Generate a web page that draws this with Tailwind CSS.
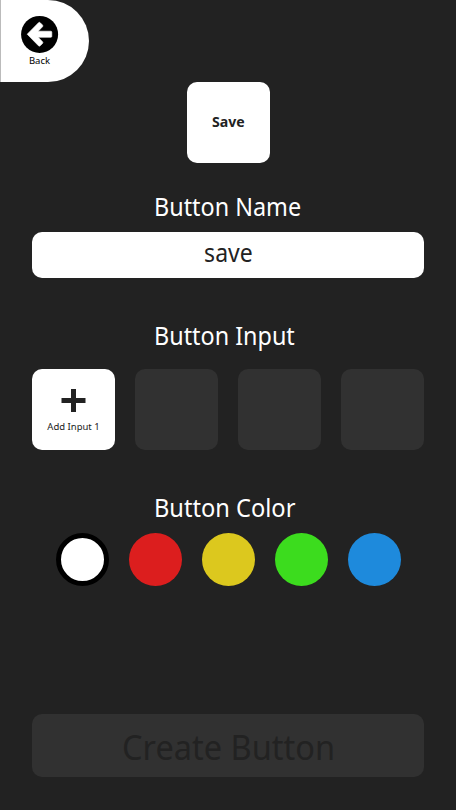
<!DOCTYPE html>
<html lang="en">
<head>
<meta charset="utf-8">
<title>Create Button</title>
<script src="https://cdn.jsdelivr.net/npm/@tailwindcss/browser@4"></script>
</head>
<body class="bg-[#222222] font-['Noto_Sans','Open_Sans',sans-serif] text-[#222222]">
<div class="flex h-[810px] w-[456px] flex-col overflow-hidden whitespace-nowrap bg-[#222222]">
  <button class="flex h-[82px] w-[89px] shrink-0 flex-col items-center rounded-r-[41px] border-l border-[#bbbbbb] bg-white pr-[11px] pt-[15px] text-black">
    <svg class="-ml-px h-[38px] w-[38px] overflow-visible" viewBox="0 0 38 38"><circle cx="19.600" cy="19.400" r="18.500" fill="#000"/><path d="M7.200 19.200 18.500 7.700Q19.300 6.900 20.200 7.700L22.500 10Q23.300 10.900 22.500 11.800L18.200 16.200H30.800Q31.800 16.200 31.800 17.200V21.300Q31.800 22.300 30.800 22.300H18.200L22.500 26.700Q23.300 27.600 22.500 28.500L20.200 30.800Q19.300 31.600 18.500 30.800Z" fill="#fff" stroke="#fff" stroke-width=".6" stroke-linejoin="round"/></svg>
    <span class="mt-px text-[9.500px] leading-[13px]">Back</span>
  </button>
  <div class="flex h-[81px] w-[83px] shrink-0 items-center justify-center self-center rounded-[10px] bg-white pb-[2px] text-[15px] font-bold"><span class="inline-block scale-x-[0.94]">Save</span></div>
  <h2 class="ml-[154px] mt-[27px] h-[34px] origin-left scale-x-[0.935] shrink-0 text-[25px] leading-[32px] text-white">Button Name</h2>
  <div class="mx-8 mt-[8px] flex h-[46px] shrink-0 justify-center rounded-[10px] bg-white text-[25px] leading-[41px]"><span class="inline-block scale-x-[0.92]">save</span></div>
  <h2 class="ml-[154px] mt-[41px] h-[34px] origin-left scale-x-[0.935] shrink-0 text-[25px] leading-[32px] text-white">Button Input</h2>
  <div class="mx-8 mt-4 grid h-[81px] shrink-0 grid-cols-4 gap-5">
    <button class="flex flex-col items-center rounded-[10px] bg-white pt-[20px]">
      <svg class="h-[23px] w-[25px]" viewBox="0 0 25 23"><path d="M.5 9H10V0h5v9h9.500v5H15v9h-5v-9H.5z" fill="#222"/></svg>
      <span class="mt-[8px] text-[9.500px] leading-[13px]">Add Input 1</span>
    </button>
    <div class="rounded-[10px] bg-[#313131]"></div>
    <div class="rounded-[10px] bg-[#313131]"></div>
    <div class="rounded-[10px] bg-[#313131]"></div>
  </div>
  <h2 class="ml-[154px] mt-[41px] h-[34px] origin-left scale-x-[0.945] shrink-0 text-[25px] leading-[32px] text-white">Button Color</h2>
  <div class="mt-[8px] flex shrink-0 justify-center gap-5">
    <div class="size-[53px] rounded-full border-5 border-black bg-white"></div>
    <div class="size-[53px] rounded-full bg-[#dc1e1e]"></div>
    <div class="size-[53px] rounded-full bg-[#dcc81e]"></div>
    <div class="size-[53px] rounded-full bg-[#3cdc1e]"></div>
    <div class="size-[53px] rounded-full bg-[#1e8adc]"></div>
  </div>
  <button class="mx-8 mb-[33px] mt-auto h-[63px] shrink-0 rounded-[10px] bg-[#313131] pb-px pl-px pt-[3px] text-[35px] leading-[59px]"><span class="inline-block scale-x-[0.93]">Create Button</span></button>
</div>
</body>
</html>
